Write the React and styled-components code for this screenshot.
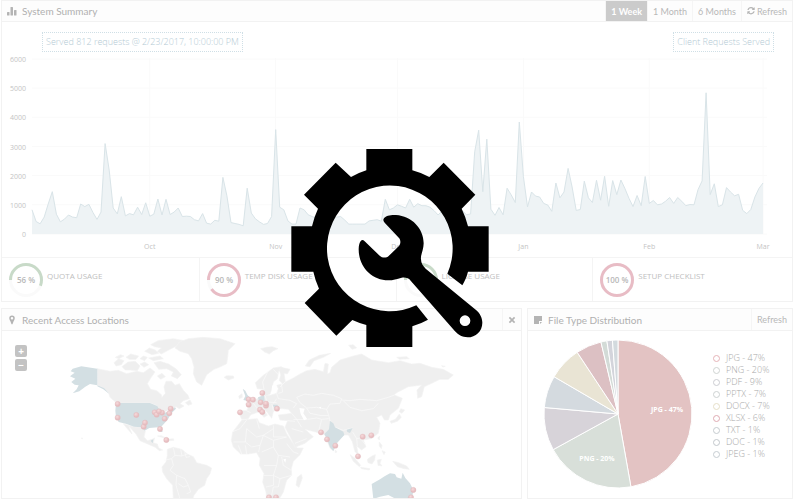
import React from "react"
import styled, { createGlobalStyle } from "styled-components"

const GlobalStyle = createGlobalStyle`
    * {
        box-sizing: border-box;
    }

    body {
        margin: 0;
        background-color: #fff;
        color: #c0c0c0;
        font-family: "Open Sans", "Noto Sans", sans-serif;
        font-size: 9px;
        line-height: 12px;
    }
`

const Page = styled.div`
    position: relative;
    display: flex;
    flex-direction: column;
    gap: 6px;
    padding: 0 0 2px 1px;
`

const Panel = styled.section`
    display: flex;
    flex-direction: column;
    min-width: 0;
    border: 1px solid #f2f2f2;
`

const PanelHeader = styled.header`
    display: flex;
    align-items: stretch;
    height: ${(props) => props.$height}px;
    border-bottom: 1px solid #f2f2f2;
    background-color: #fdfdfd;
`

const PanelTitle = styled.h2`
    display: flex;
    align-items: center;
    flex: 1;
    gap: 5px;
    margin: 0;
    padding-left: 5px;
    font-family: Lato, "Liberation Sans", sans-serif;
    font-size: 10px;
    font-weight: 400;
    color: #b0b0b0;

    svg {
        width: 10px;
        height: 10px;
        fill: #b4b4b4;
    }
`

const HeaderButton = styled.button`
    display: flex;
    align-items: center;
    gap: 2px;
    padding: 0 5px;
    border: 0;
    border-left: 1px solid #f5f5f5;
    background-color: transparent;
    color: #b8b8b8;
    font-family: Lato, "Liberation Sans", sans-serif;
    font-size: 9px;

    svg {
        width: 8px;
        height: 8px;
        fill: #b4b4b4;
    }

    ${(props) => props.$active && `
        background-color: #cbcbcb;
        color: #fff;
        font-weight: 700;
    `}
`

const Notes = styled.div`
    display: flex;
    align-items: flex-start;
    justify-content: space-between;
    height: 32px;
    padding: 10px 18px 0 40px;
`

const Note = styled.span`
    padding: 3px;
    border: 1px dotted #cfdfe6;
    color: #b4cad4;
    font-weight: 300;
`

const Drawing = styled.svg`
    display: block;
    width: 100%;
    height: auto;
`

const AxisText = styled.text`
    font-size: 7px;
    fill: #c4c4c4;
    text-anchor: ${(props) => props.$anchor};
`

const Gauges = styled.div`
    display: grid;
    grid-template-columns: repeat(4, 1fr);
    padding-right: 3px;
    border-top: 1px solid #f4f4f4;
`

const GaugeCell = styled.div`
    display: flex;
    align-items: flex-start;
    gap: 3px;
    height: 43px;
    padding: 4px 6px;

    & + & {
        border-left: 1px solid #f4f4f4;
    }
`

const GaugeDial = styled.svg`
    width: 36px;
    height: 36px;
`

const GaugeText = styled.text`
    font-size: 8px;
    font-weight: 600;
    fill: #b8b8b8;
    text-anchor: middle;
`

const GaugeLabel = styled.span`
    padding-top: 8px;
    font-size: 8px;
`

const Lower = styled.div`
    display: grid;
    grid-template-columns: 521fr 266fr;
    gap: 5px;
`

const MapArea = styled.div`
    position: relative;
`

const ZoomControls = styled.div`
    position: absolute;
    top: 14px;
    left: 13px;
    display: flex;
    flex-direction: column;
    gap: 2px;
`

const ZoomButton = styled.button`
    width: 12px;
    height: 12px;
    padding: 0;
    border: 0;
    border-radius: 2px;
    background-color: #c3c3c3;
    color: #fff;
    font-family: inherit;
    font-size: 10px;
    font-weight: 700;
    line-height: 12px;
`

const PieBody = styled.div`
    display: flex;
    align-items: flex-start;
    padding: 8px 0 0 15px;
    gap: 20px;
`

const Pie = styled.svg`
    flex: 0 1 150px;
    min-width: 0;
`

const SliceText = styled.text`
    font-size: 7px;
    font-weight: 700;
    fill: #fff;
    text-anchor: middle;
`

const Legend = styled.ul`
    display: flex;
    flex-direction: column;
    margin: 0;
    padding: 13px 0 0;
    list-style: none;
`

const LegendItem = styled.li`
    display: flex;
    align-items: center;
    gap: 6px;
    font-weight: 300;
    color: #a8a8a8;
    white-space: nowrap;

    &::before {
        content: "";
        width: 5px;
        height: 5px;
        border: 1px solid ${(props) => props.$color};
        border-radius: 50%;
    }
`

const Overlay = styled.div`
    position: absolute;
    inset: 0;
    display: flex;
    align-items: center;
    justify-content: center;
    pointer-events: none;
`

const requests = [
    830, 430, 350, 580, 1030, 1450, 680, 420, 510, 650, 580, 560, 1030, 940, 1020,
    740, 500, 750, 3100, 2190, 890, 690, 1280, 620, 700, 660, 920, 670, 1070, 610,
    680, 1200, 650, 1190, 670, 750, 890, 600, 610, 600, 490, 450, 700, 370, 340,
    470, 440, 1940, 1310, 390, 360, 330, 280, 1570, 720, 520, 420, 330, 360, 600,
    3580, 920, 830, 450, 340, 340, 890, 830, 660, 600, 550, 600, 600, 580, 560,
    580, 600, 480, 340, 340, 340, 340, 340, 450, 470, 490, 440, 1190, 830, 890,
    1000, 950, 890, 1190, 920, 1040, 970, 970, 920, 800, 650, 800, 900, 900, 900,
    900, 800, 660, 690, 2820, 3560, 1450, 3250, 850, 640, 910, 660, 1570, 1340, 1080,
    3840, 1970, 930, 1440, 1300, 1270, 1050, 990, 780, 1750, 1240, 1440, 2250, 1610, 810,
    840, 1810, 1240, 1080, 1840, 1160, 1980, 950, 1830, 1350, 1850, 1560, 1220, 940, 1320,
    970, 1970, 1050, 1150, 1000, 1030, 1120, 1250, 1050, 1250, 1120, 970, 1010, 1000, 1520,
    1820, 4840, 1350, 1720, 940, 1000, 1590, 1440, 1310, 1360, 810, 700, 840, 1270, 1560,
    1750,
]

const months = [
    { name: "Oct", day: 29 },
    { name: "Nov", day: 60 },
    { name: "Dec", day: 90 },
    { name: "Jan", day: 121 },
    { name: "Feb", day: 152 },
    { name: "Mar", day: 180 },
]

const gauges = [
    { label: "QUOTA USAGE", value: 56, color: "#c8dac8" },
    { label: "TEMP DISK USAGE", value: 90, color: "#e8bcc5" },
    { label: "LICENSE USAGE", value: 56, color: "#c8dac8" },
    { label: "SETUP CHECKLIST", value: 100, color: "#e8bcc5" },
]

const fileTypes = [
    { name: "JPG", percent: 47, share: 47.2, color: "#e3c3c3", ring: "#e6b4b8" },
    { name: "PNG", percent: 20, share: 19.8, color: "#d8dfd9", ring: "#cfd4d2" },
    { name: "PDF", percent: 9, share: 9.4, color: "#d7d3d9", ring: "#cccdd2" },
    { name: "PPTX", percent: 7, share: 7, color: "#d4dadf", ring: "#cdd2d2" },
    { name: "DOCX", percent: 7, share: 7.3, color: "#e9e4d4", ring: "#e6dfc8" },
    { name: "XLSX", percent: 6, share: 5.6, color: "#dcc0c3", ring: "#dfaab2" },
    { name: "TXT", percent: 1, share: 1.3, color: "#d3dbd7", ring: "#c6ccd0" },
    { name: "DOC", percent: 1, share: 1.2, color: "#d3d4db", ring: "#c2c7cc" },
    { name: "JPEG", percent: 1, share: 1.2, color: "#d3dade", ring: "#c6cdd2" },
]

const land = [
    // Canada and its islands
    "M112,110 150,118 175,115 200,125 230,118 250,122 270,108 285,120 272,138 262,155 272,172 290,176 304,188 306,196 316,184 312,165 318,148 335,148 345,160 358,155 370,175 384,190 388,200 370,206 360,215 372,222 358,230 348,224 330,232 312,240 300,236 290,220 270,213 170,213 150,196 146,184 130,168 112,160Z",
    "M162,92 176,80 192,86 184,98 168,102Z M186,104 204,90 226,88 240,102 232,116 210,114 196,114Z",
    "M166,76 182,68 192,72 176,80Z M198,76 212,66 236,72 228,82 208,82Z M240,80 250,72 262,76 254,86Z",
    "M240,96 254,90 266,98 252,106Z M254,58 268,48 286,54 296,64 276,68Z M266,78 300,72 310,80 280,86Z",
    "M272,38 294,26 340,20 372,26 350,42 330,52 304,66 292,58 304,48 284,44Z",
    "M282,92 300,88 326,96 350,112 364,128 352,140 334,132 340,120 320,110 296,112Z M292,132 306,124 316,134 302,142Z",
    "M376,212 390,204 396,216 384,220Z",
    // Greenland, Iceland, Svalbard
    "M358,30 385,20 430,16 480,20 525,35 505,55 503,75 500,95 480,105 462,112 440,128 425,160 410,150 400,125 402,105 395,80 385,65 360,58 345,48Z",
    "M492,136 500,131 520,132 522,138 505,144Z M602,50 618,46 636,44 654,50 640,56 628,66 614,60Z",
    // Mexico, Central America, Caribbean
    "M190,275 222,284 244,286 256,298 252,315 262,326 276,322 284,318 280,332 292,336 296,348 308,354 298,356 286,346 268,338 240,326 228,306 206,282 216,306 200,288Z",
    "M292,312 304,311 318,318 306,316Z M324,322 340,320 342,325 328,326Z M64,318 69,319 66,321Z",
    // South America
    "M322,352 340,346 365,352 382,366 400,374 410,392 440,400 455,408 450,425 440,440 434,460 415,472 402,490 398,501 340,501 338,460 320,440 308,420 306,405 318,390 322,370Z",
    // Africa, Madagascar
    "M546,264 592,260 598,272 625,282 645,276 670,282 680,305 696,330 712,348 730,348 720,368 700,388 694,410 695,430 680,445 670,480 658,501 620,501 618,480 608,450 612,425 598,400 600,380 590,362 565,366 542,366 520,345 514,325 518,300 532,282Z",
    "M712,436 724,427 727,438 717,466 708,460Z",
    // Scandinavia
    "M586,152 610,130 640,108 664,104 672,112 656,118 652,140 640,150 636,172 630,186 616,192 610,172 592,170Z",
    // Europe and Asia
    "M664,106 690,112 682,126 672,124 676,150 700,138 720,126 740,116 765,112 790,119 795,94 805,96 802,126 810,122 815,106 840,84 880,72 905,66 935,84 985,92 1020,86 1055,96 1080,94 1115,106 1150,112 1180,129 1165,142 1140,142 1115,154 1093,164 1085,194 1073,199 1071,174 1085,159 1045,164 1010,182 1003,189 1027,199 1015,229 990,249 985,264 973,264 965,249 950,256 960,274 955,304 933,320 910,324 918,344 905,354 890,342 895,369 885,359 877,329 865,309 850,309 830,334 820,357 810,349 795,309 775,302 735,292 760,314 735,334 705,346 690,314 675,286 683,266 660,264 655,249 680,246 695,244 685,232 655,229 640,239 635,259 620,239 608,228 622,250 612,256 596,240 572,248 565,260 545,262 540,250 540,236 560,236 566,224 556,216 578,208 595,198 612,190 630,190 650,184 655,170 650,160 668,155 658,146 662,130 658,112Z",
    // Arctic islands
    "M736,102 748,84 778,70 812,64 790,76 762,86 750,104Z M866,40 880,38 890,48 876,52Z M1010,76 1040,74 1048,80 1018,82Z M1145,101 1156,103 1148,105Z",
    // Japan, Taiwan, Indonesia, New Guinea
    "M1022,230 1034,234 1026,244 1018,240Z M1018,246 1024,256 1012,268 994,274 990,268 1006,262Z M953,318 959,312 958,324Z",
    "M870,368 884,378 902,400 898,404 880,388Z M902,406 930,410 928,414 904,410Z M922,382 936,372 946,368 944,384 936,396 924,392Z M952,384 964,382 960,394 966,402 954,400Z M998,388 1016,392 1040,402 1048,412 1032,410 1012,404Z",
    "M958,330 966,340 964,350 958,342Z M966,356 976,360 972,368Z M826,354 831,360 826,362Z M536,192 546,185 547,196 538,200Z",
]

const highlighted = [
    "M112,110 64,103 38,110 32,118 44,122 30,133 46,140 34,150 44,158 56,160 50,172 38,184 58,178 76,164 90,156 112,160 132,168 148,186 130,172 112,163Z",
    "M168,213 270,213 292,222 300,236 314,242 328,238 345,226 348,230 332,246 324,262 308,280 302,285 308,300 302,300 294,286 268,288 254,296 244,286 222,284 200,276 176,270 168,256 166,236Z",
    "M548,170 556,176 562,188 572,200 560,206 550,204 556,192Z M594,196 612,190 614,206 602,212 596,206Z M638,218 652,218 656,226 644,230Z M272,326 280,322 278,334Z",
    "M810,267 820,274 825,286 850,299 853,309 830,334 820,357 810,346 800,319 793,306 807,292Z M860,293 878,288 870,303 862,300Z",
    "M935,456 960,442 975,432 990,424 1005,426 1010,436 1024,440 1028,422 1036,438 1050,454 1060,474 1056,501 1008,501 985,489 960,494 940,501Z",
]

const seas = [
    "M718,228 734,230 730,244 742,262 732,265 722,246Z",
    "M636,162 646,152 650,162 642,176 634,188Z",
    "M670,382 678,380 676,392Z",
    "M776,226 784,224 782,230Z",
]

const borders = [
    // Africa
    "M560,264 540,290 516,300 M560,290 590,315 610,310 640,290 M640,280 640,315 680,315 M590,262 598,290 M560,290 556,330 520,330 M556,330 575,345 600,340 610,310 M600,340 596,360 M610,310 640,325 640,345 605,360 M640,325 680,315 M640,345 655,370 690,375 M680,335 700,360 715,365 M655,370 650,400 612,400 M650,400 640,430 612,430 M640,430 660,440 694,430 M640,430 640,460 618,465 M660,440 655,465 640,465 635,490 M665,375 670,400 694,415 M535,340 545,366 M556,340 560,366",
    // South America
    "M340,348 345,370 335,380 312,385 M345,370 365,372 382,366 M362,352 366,372 M374,358 378,376 390,374 M335,380 340,400 330,415 350,430 M350,430 348,460 360,501 M350,430 375,440 385,460 370,465 355,455 M385,460 392,480 380,485",
    // Europe
    "M560,236 572,242 M578,212 590,226 596,240 M595,200 600,216 M616,192 622,216 608,222 M622,210 650,212 M650,184 655,200 690,205 M636,216 640,236 M625,116 608,150 612,172 M655,128 640,112 M664,155 668,180 655,184 M690,205 710,215 700,228 M675,150 660,165 M650,200 640,215",
    // Asia
    "M710,196 735,186 760,190 785,184 820,190 845,200 840,214 810,216 800,232 770,226 740,228 720,212 710,196 M845,204 870,206 900,202 950,206 985,196 1003,189 M850,206 870,226 905,236 940,230 955,214 M800,232 806,250 810,267 M740,228 750,244 780,250 806,250 M742,262 770,258 785,262 775,302 M785,262 806,260 M695,244 710,262 725,286 M683,266 705,268 M695,290 730,300 M825,286 850,295 878,288 M878,300 890,320 900,318 M890,320 892,342 M900,318 910,330 918,340 M705,334 740,320 M700,262 735,262",
]

const pins = [
    [173, 216], [173, 257], [229, 249], [284, 241], [290, 248], [306, 242], [297, 238],
    [332, 230], [328, 244], [314, 260], [251, 284], [255, 272], [300, 291], [319, 324],
    [540, 241], [566, 218], [566, 202], [579, 203], [607, 183], [602, 211], [618, 221],
    [618, 215], [600, 233], [607, 240], [651, 230], [783, 301], [801, 322], [826, 341],
    [894, 373], [908, 314], [934, 310], [1060, 474], [1053, 496], [627, 496], [648, 496],
]

const BarsIcon = () => (
    <svg viewBox="0 0 20 20" aria-hidden="true">
        <rect x="0" y="12" width="5" height="7" rx="1" />
        <rect x="7" y="2" width="5" height="17" rx="1" />
        <rect x="14" y="8" width="5" height="11" rx="1" />
    </svg>
)

const PinIcon = () => (
    <svg viewBox="0 0 20 20" aria-hidden="true">
        <path fillRule="evenodd" d="M10 1a5.500 5.500 0 0 1 5.500 5.500C15.500 9 14 10.500 13 13l-2 5.500h-2L7 13C6 10.500 4.500 9 4.500 6.500A5.500 5.500 0 0 1 10 1Zm0 3a2.500 2.500 0 1 0 0 5 2.500 2.500 0 0 0 0-5Z" />
    </svg>
)

const NoteIcon = () => (
    <svg viewBox="0 0 20 20" aria-hidden="true">
        <path d="M2 2h16v10h-6v6H2Z M14 14h4l-4 4Z" />
    </svg>
)

const CloseIcon = () => (
    <svg viewBox="0 0 20 20" aria-hidden="true">
        <path d="M5 2 10 7l5-5 3 3-5 5 5 5-3 3-5-5-5 5-3-3 5-5-5-5Z" />
    </svg>
)

const RefreshIcon = () => (
    <svg viewBox="0 0 1536 1664" aria-hidden="true">
        <path d="M1511 928q0 5-1 7-64 268-268 434.500t-478 166.500q-146 0-282.500-55t-243.500-157l-129 129q-19 19-45 19t-45-19-19-45v-448q0-26 19-45t45-19h448q26 0 45 19t19 45-19 45l-137 137q71 66 161 102t187 36q134 0 250-65t186-179q11-17 53-117 8-23 30-23h192q13 0 22.500 9.500t9.500 22.500zm25-800v448q0 26-19 45t-45 19h-448q-26 0-45-19t-19-45 19-45l138-138q-148-137-349-137-134 0-250 65t-186 179q-11 17-53 117-8 23-30 23h-199q-13 0-22.500-9.500t-9.500-22.500v-7q65-268 270-434.500t480-166.500q146 0 284 55.500t245 156.500l130-129q19-19 45-19t45 19 19 45z" />
    </svg>
)

const chartX = (day) => 32 + (day * 731) / 180
const chartY = (value) => 234 - (value * 175) / 6000

const RequestsChart = () => {
    const line = requests.map((value, day) => `${chartX(day).toFixed(1)},${chartY(value).toFixed(1)}`).join(" ")
    return (
        <Drawing viewBox="2 54 790 203" role="img" aria-label="Client requests served">
            {[0, 1000, 2000, 3000, 4000, 5000, 6000].map((value) => (
                <g key={value}>
                    <line x1="32" x2="767" y1={chartY(value)} y2={chartY(value)} stroke="#fafafa" />
                    <AxisText x="26" y={chartY(value) + 3} $anchor="end">{value}</AxisText>
                </g>
            ))}
            {months.map(({ name, day }) => (
                <g key={name}>
                    <line x1={chartX(day)} x2={chartX(day)} y1="58" y2="234" stroke="#fafafa" />
                    <AxisText x={chartX(day)} y="249" $anchor="middle">{name}</AxisText>
                </g>
            ))}
            <polygon points={`32,234 ${line} 763,234`} fill="#edf2f4" fillOpacity="0.95" />
            <polyline points={line} fill="none" stroke="#d9e4e8" />
        </Drawing>
    )
}

const Gauge = ({ label, value, color }) => (
    <GaugeCell>
        <GaugeDial viewBox="0 0 36 36" role="img" aria-label={`${label} ${value} %`}>
            <circle cx="18" cy="18" r="15.500" fill="none" stroke="#fafafa" strokeWidth="3" />
            <circle
                cx="18"
                cy="18"
                r="15.500"
                fill="none"
                stroke={color}
                strokeWidth="3"
                pathLength="100"
                strokeDasharray={`${value} 100`}
                transform="rotate(180 18 18)"
            />
            <GaugeText x="18" y="21">{value} %</GaugeText>
        </GaugeDial>
        <GaugeLabel>{label}</GaugeLabel>
    </GaugeCell>
)

const WorldMap = () => (
    <Drawing viewBox="-174 -3 1557 501" role="img" aria-label="World map">
        <defs>
            <radialGradient id="pin" cx="40%" cy="35%">
                <stop offset="0" stopColor="#f6dadb" />
                <stop offset="1" stopColor="#e6bcbf" />
            </radialGradient>
        </defs>
        {land.map((d) => <path key={d} d={d} fill="#efefef" stroke="#f3f3f3" strokeWidth="2" strokeLinejoin="round" />)}
        {borders.map((d) => <path key={d} d={d} fill="none" stroke="#fafafa" strokeWidth="2" />)}
        {highlighted.map((d) => <path key={d} d={d} fill="#d3dfe3" />)}
        {seas.map((d) => <path key={d} d={d} fill="#fff" />)}
        {pins.map(([x, y]) => (
            <circle key={`${x}-${y}`} cx={x} cy={y} r="8" fill="url(#pin)" stroke="#e2bcc0" />
        ))}
    </Drawing>
)

const piePoint = (percent, radius) => {
    const angle = (percent / 100) * Math.PI * 2
    return `${(75 + radius * Math.sin(angle)).toFixed(2)},${(75 - radius * Math.cos(angle)).toFixed(2)}`
}

const slices = fileTypes.map((type, i) => {
    const start = fileTypes.slice(0, i).reduce((sum, item) => sum + item.share, 0)
    return { ...type, d: `M75,75 L${piePoint(start, 74)} A74,74 0 0 1 ${piePoint(start + type.share, 74)}Z` }
})

const FileTypePie = () => (
    <Pie viewBox="0 0 150 150" role="img" aria-label="File types">
        {slices.map(({ name, color, d }) => (
            <path key={name} d={d} fill={color} stroke="#fff" strokeLinejoin="round" />
        ))}
        <SliceText x="124" y="73">JPG - 47%</SliceText>
        <SliceText x="54" y="122">PNG - 20%</SliceText>
    </Pie>
)

const ServiceIcon = () => (
    <svg viewBox="78 87 633 609" width="211" height="203" role="img" aria-label="Maintenance">
        <path d="M304 86H442V151A242 242 0 0 1 493 171L536 128 631 224 590 266A242 242 0 0 1 609 319H671V455H609C605 470 599 484 592 496L547 461A188.500 188.500 0 1 0 454 556L489 599A242 242 0 0 1 442 619V681H304V615A242 242 0 0 1 262 600L214 647 119 549 162 506A242 242 0 0 1 145 455H79V319H141A242 242 0 0 1 159 266L117 224 212 128 258 171A242 242 0 0 1 304 151Z" />
        <path fillRule="evenodd" d="M356 296C362 286 380 284 393 285C440 288 476 325 476 370C476 390 466 405 468 418C468 430 474 438 482 446L634 571C645 580 652 595 652 608C652 634 632 652 608 652C592 652 578 643 570 634L437 482C430 473 422 472 410 473C395 477 385 481 370 481C320 481 281 440 281 388C281 375 284 366 288 362C291 359 295 360 299 364L344 407C352 415 365 414 371 408L402 378C408 371 407 360 402 354L359 308C355 304 354 300 356 296ZM600 586A16 16 0 1 0 600 618A16 16 0 1 0 600 586Z" />
    </svg>
)

const App = () => {
    return (
        <Page>
            <GlobalStyle />
            <Panel>
                <PanelHeader $height={21}>
                    <PanelTitle><BarsIcon />System Summary</PanelTitle>
                    <HeaderButton type="button" $active>1 Week</HeaderButton>
                    <HeaderButton type="button">1 Month</HeaderButton>
                    <HeaderButton type="button">6 Months</HeaderButton>
                    <HeaderButton type="button"><RefreshIcon />Refresh</HeaderButton>
                </PanelHeader>
                <Notes>
                    <Note>Served 812 requests @ 2/23/2017, 10:00:00 PM</Note>
                    <Note>Client Requests Served</Note>
                </Notes>
                <RequestsChart />
                <Gauges>
                    {gauges.map((gauge) => <Gauge key={gauge.label} {...gauge} />)}
                </Gauges>
            </Panel>
            <Lower>
                <Panel>
                    <PanelHeader $height={22}>
                        <PanelTitle><PinIcon />Recent Access Locations</PanelTitle>
                        <HeaderButton type="button" aria-label="Close"><CloseIcon /></HeaderButton>
                    </PanelHeader>
                    <MapArea>
                        <WorldMap />
                        <ZoomControls>
                            <ZoomButton type="button" aria-label="Zoom in">+</ZoomButton>
                            <ZoomButton type="button" aria-label="Zoom out">−</ZoomButton>
                        </ZoomControls>
                    </MapArea>
                </Panel>
                <Panel>
                    <PanelHeader $height={22}>
                        <PanelTitle><NoteIcon />File Type Distribution</PanelTitle>
                        <HeaderButton type="button">Refresh</HeaderButton>
                    </PanelHeader>
                    <PieBody>
                        <FileTypePie />
                        <Legend>
                            {fileTypes.map(({ name, percent, ring }) => (
                                <LegendItem key={name} $color={ring}>{name} - {percent}%</LegendItem>
                            ))}
                        </Legend>
                    </PieBody>
                </Panel>
            </Lower>
            <Overlay>
                <ServiceIcon />
            </Overlay>
        </Page>
    )
}

export default App
